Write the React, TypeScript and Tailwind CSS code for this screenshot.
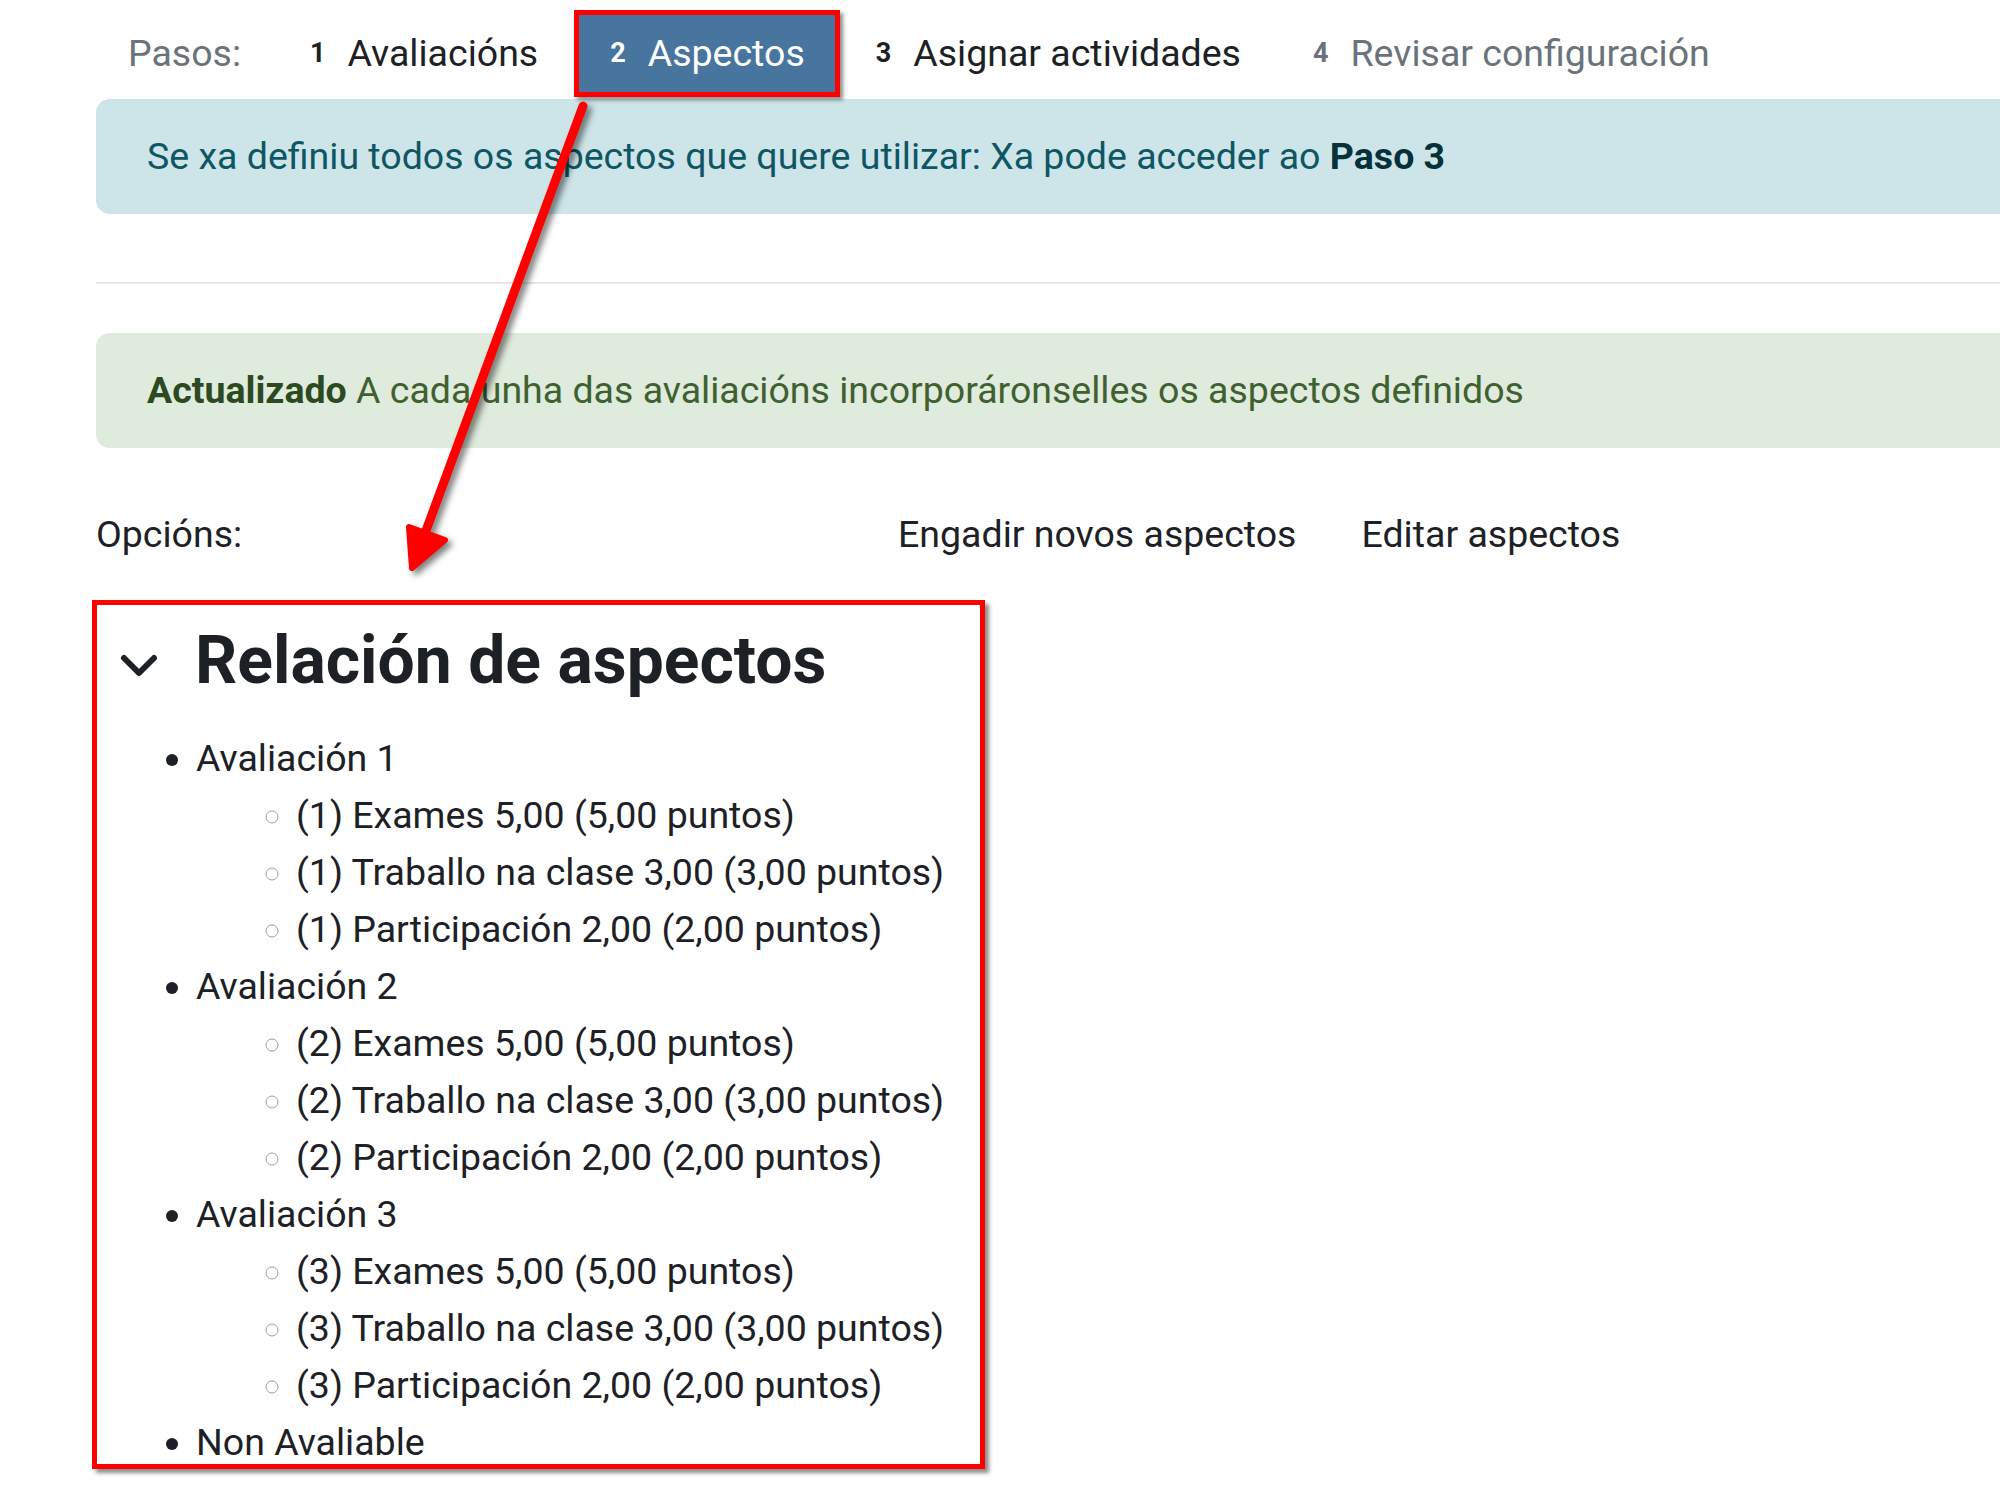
import React from "react";

const STEPS = [
  { n: "1", label: "Avaliacións", state: "done" },
  { n: "2", label: "Aspectos", state: "active" },
  { n: "3", label: "Asignar actividades", state: "done" },
  { n: "4", label: "Revisar configuración", state: "todo" },
];

const EVALUATIONS = [1, 2, 3].map((i) => ({
  title: `Avaliación ${i}`,
  items: [
    `(${i}) Exames 5,00 (5,00 puntos)`,
    `(${i}) Traballo na clase 3,00 (3,00 puntos)`,
    `(${i}) Participación 2,00 (2,00 puntos)`,
  ],
}));

function StepNav() {
  return (
    <nav className="mt-[10px] flex h-[87px] items-stretch pl-[32px]">
      <span className="flex items-center pr-[33px] text-[#6a737b]">Pasos:</span>
      {STEPS.map((s) =>
        s.state === "active" ? (
          <span
            key={s.n}
            className="relative flex items-center gap-[22px] bg-[#47759e] pl-[36px] pr-[35px] text-white"
          >
            <span className="text-[27px] font-bold">{s.n}</span>
            {s.label}
            {/* annotation box round the active step */}
            <span className="pointer-events-none absolute inset-0 border-[5px] border-[#ff0000] shadow-[3px_3px_4px_rgba(0,0,0,0.45)]" />
          </span>
        ) : (
          <span
            key={s.n}
            className={
              s.state === "todo"
                ? "flex items-center gap-[22px] px-[36px] text-[#6a737b]"
                : "flex items-center gap-[22px] px-[36px] text-[#1d2125]"
            }
          >
            <span className="text-[27px] font-bold">{s.n}</span>
            {s.label}
          </span>
        )
      )}
    </nav>
  );
}

function Chevron() {
  return (
    <svg width="40" height="40" viewBox="0 0 40 40" className="mt-[8px] shrink-0">
      <polyline
        points="5,13 20,28 35,13"
        fill="none"
        stroke="#1d2125"
        strokeWidth="6"
        strokeLinecap="round"
        strokeLinejoin="round"
      />
    </svg>
  );
}

function Annotations() {
  return (
    <div className="pointer-events-none absolute inset-0">
      {/* box round the section */}
      <div className="absolute left-[92px] top-[600px] h-[869px] w-[893px] border-[5px] border-[#ff0000] shadow-[4px_4px_4px_rgba(0,0,0,0.45)]" />
      <svg
        width="2000"
        height="1504"
        className="absolute left-0 top-0 drop-shadow-[4px_4px_3px_rgba(0,0,0,0.5)]"
      >
        <line
          x1="583"
          y1="106"
          x2="424"
          y2="536"
          stroke="#ff0000"
          strokeWidth="9"
          strokeLinecap="round"
        />
        <polygon
          points="409,527 445,540 412,568"
          fill="#ff0000"
          stroke="#ff0000"
          strokeWidth="6"
          strokeLinejoin="round"
        />
      </svg>
    </div>
  );
}

export default function App() {
  return (
    <div className="relative h-[1504px] w-[2000px] overflow-hidden bg-white font-['Roboto',sans-serif] text-[37.5px] text-[#1d2125]">
      <div className="pl-[96px]">
        <StepNav />

        <div className="mt-[2px] w-[2000px] rounded-[14px] bg-[#cde5e9] px-[51px] py-[29px] leading-[57px] text-[#0f5663]">
          Se xa definiu todos os aspectos que quere utilizar: Xa pode acceder ao{" "}
          <strong className="text-[#06303a]">Paso 3</strong>
        </div>

        <div className="mt-[68px] h-[2px] w-[2000px] bg-[#e6e6e6]" />

        <div className="mt-[49px] w-[2000px] rounded-[14px] bg-[#dfebdc] px-[51px] py-[29px] leading-[57px] text-[#3f6030]">
          <strong className="text-[#2c4a1f]">Actualizado</strong> A cada unha das
          avaliacións incorporáronselles os aspectos definidos
        </div>

        <div className="mt-[58px] flex leading-[57px]">
          <span className="w-[802px]">Opcións:</span>
          <div className="flex gap-[65px]">
            <span>Engadir novos aspectos</span>
            <span>Editar aspectos</span>
          </div>
        </div>

        <section className="mt-[54px]">
          <div className="flex items-center gap-[36px] pl-[23px]">
            <Chevron />
            <h2 className="text-[66px] font-bold leading-[88px]">Relación de aspectos</h2>
          </div>
          <ul className="mt-[25px] list-disc pl-[100px] leading-[57px]">
            {EVALUATIONS.map((ev) => (
              <li key={ev.title}>
                {ev.title}
                <ul className="list-[circle] pl-[100px] marker:text-[#9aa0a6]">
                  {ev.items.map((it) => (
                    <li key={it}>{it}</li>
                  ))}
                </ul>
              </li>
            ))}
            <li>Non Avaliable</li>
          </ul>
        </section>
      </div>
      <Annotations />
    </div>
  );
}
